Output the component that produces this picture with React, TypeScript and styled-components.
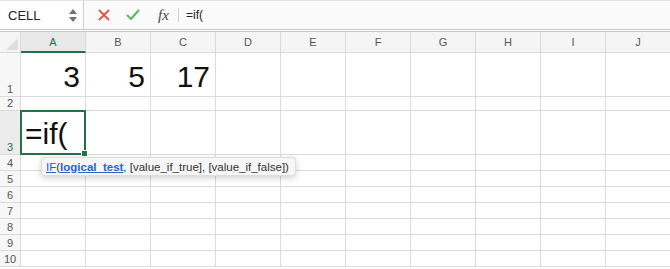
import React from "react";
import styled, { createGlobalStyle } from "styled-components";

const Global = createGlobalStyle`
  html, body { margin: 0; padding: 0; background: #fff; }
  body { font-family: "Liberation Sans", Arial, sans-serif; overflow: hidden; }
`;

const GREEN = "#217346";
const GRID = "#dadada";

const Page = styled.div`
  width: 670px;
  height: 269px;
  overflow: hidden;
  position: relative;
`;

const FormulaBar = styled.div`
  display: flex;
  align-items: stretch;
  height: 29px;
  border-top: 1px solid #e2e2e2;
  box-sizing: border-box;
  background: #fafafa;
`;

const NameBox = styled.div`
  width: 84px;
  box-sizing: border-box;
  border-right: 1px solid #cfcfcf;
  background: #fff;
  display: flex;
  align-items: center;
  justify-content: space-between;
  padding: 0 6px 0 8px;
  font-size: 13px;
  color: #222;
`;

const Spinner = styled.div`
  display: flex;
  flex-direction: column;
  gap: 3px;
`;

const Actions = styled.div`
  display: flex;
  align-items: center;
  box-sizing: border-box;
  padding-left: 14px;
  gap: 16px;
  width: 94px;
`;

const Fx = styled.span`
  font-family: "Liberation Serif", "Times New Roman", serif;
  font-style: italic;
  font-size: 15px;
  color: #444;
  padding-left: 2px;
`;

const Input = styled.div`
  flex: 1;
  display: flex;
  align-items: center;
  border-left: 1px solid #d0d0d0;
  margin: 7px 0;
  padding-left: 7px;
  font-size: 12px;
  color: #222;
`;

const Divider = styled.div`
  border-top: 1px solid #c8c8c8;
  border-bottom: 1px solid #c8c8c8;
  box-sizing: border-box;
  height: 3px;
  background: #fff;
`;

const Sheet = styled.div`
  display: grid;
  grid-template-columns: 21px repeat(10, 65px);
  grid-template-rows: 21px 44px 14px 44px repeat(7, 16px);
  position: relative;
`;

const Corner = styled.div`
  background: #f5f5f5;
  border-right: 1px solid ${GRID};
  border-bottom: 1px solid ${GRID};
  box-sizing: border-box;
  position: relative;
  &::after {
    content: "";
    position: absolute;
    right: 2px;
    bottom: 2px;
    border-left: 12px solid transparent;
    border-bottom: 12px solid #dedede;
  }
`;

const ColHead = styled.div<{ $active?: boolean }>`
  background: ${(p) => (p.$active ? "#e9e9e9" : "#f5f5f5")};
  border-right: 1px solid ${GRID};
  border-bottom: ${(p) => (p.$active ? `2px solid ${GREEN}` : `1px solid ${GRID}`)};
  box-sizing: border-box;
  display: flex;
  align-items: center;
  justify-content: center;
  font-size: 11px;
  color: ${(p) => (p.$active ? GREEN : "#555")};
`;

const RowHead = styled.div<{ $active?: boolean }>`
  background: ${(p) => (p.$active ? "#ececec" : "#f7f7f7")};
  border-right: 1px solid ${GRID};
  border-bottom: 1px solid ${GRID};
  box-sizing: border-box;
  display: flex;
  align-items: flex-end;
  justify-content: center;
  padding-bottom: 1px;
  font-size: 11px;
  color: ${(p) => (p.$active ? GREEN : "#555")};
`;

const Cell = styled.div<{ $align?: "left" | "right" }>`
  border-right: 1px solid ${GRID};
  border-bottom: 1px solid ${GRID};
  box-sizing: border-box;
  display: flex;
  align-items: flex-end;
  justify-content: ${(p) => (p.$align === "left" ? "flex-start" : "flex-end")};
  padding: 0 5px 4px 5px;
  font-size: 30px;
  line-height: 1;
  color: #111;
`;

const ActiveCell = styled(Cell)`
  border: 2px solid ${GREEN};
  position: relative;
  margin: -1px 0 0 -1px;
  padding-left: 3px;
  &::after {
    content: "";
    position: absolute;
    right: -4px;
    bottom: -4px;
    width: 5px;
    height: 5px;
    background: ${GREEN};
    border: 1px solid #fff;
  }
`;

const Tip = styled.div`
  position: absolute;
  left: 41px;
  top: 125px;
  height: 17px;
  padding: 0 6px 0 4px;
  display: flex;
  align-items: center;
  background: #f6f6f6;
  border: 1px solid #dcdcdc;
  border-radius: 3px;
  box-shadow: 0 2px 6px rgba(0, 0, 0, 0.18);
  font-size: 11.5px;
  color: #333;
  white-space: nowrap;
`;

const TipLink = styled.span<{ $bold?: boolean }>`
  color: #2463d1;
  text-decoration: underline;
  font-weight: ${(p) => (p.$bold ? 700 : 400)};
`;

const cols = ["A", "B", "C", "D", "E", "F", "G", "H", "I", "J"];

const data: Record<number, (string | null)[]> = {
  1: ["3", "5", "17"],
};

export default function App() {
  return (
    <Page>
      <Global />
      <FormulaBar>
        <NameBox>
          CELL
          <Spinner>
            <svg width="8" height="5" viewBox="0 0 8 5"><path d="M4 0L8 5H0z" fill="#707070" /></svg>
            <svg width="8" height="5" viewBox="0 0 8 5"><path d="M0 0h8L4 5z" fill="#707070" /></svg>
          </Spinner>
        </NameBox>
        <Actions>
          <svg width="12" height="12" viewBox="0 0 12 12">
            <path d="M1.5 1.5l9 9M10.5 1.5l-9 9" stroke="#e0504a" strokeWidth="1.8" strokeLinecap="round" />
          </svg>
          <svg width="14" height="12" viewBox="0 0 14 12">
            <path d="M1.5 6.5l3.5 3.5 7.5-8.5" stroke="#5cb85c" strokeWidth="2" fill="none" strokeLinecap="round" strokeLinejoin="round" />
          </svg>
          <Fx>fx</Fx>
        </Actions>
        <Input>=if(</Input>
      </FormulaBar>
      <Divider />
      <Sheet>
        <Corner />
        {cols.map((c) => (
          <ColHead key={c} $active={c === "A"}>{c}</ColHead>
        ))}
        {Array.from({ length: 10 }, (_, i) => i + 1).map((r) => (
          <React.Fragment key={r}>
            <RowHead $active={r === 3}>{r}</RowHead>
            {cols.map((c, ci) => {
              if (r === 3 && ci === 0) {
                return <ActiveCell key={c} $align="left">=if(</ActiveCell>;
              }
              return <Cell key={c}>{data[r]?.[ci] ?? ""}</Cell>;
            })}
          </React.Fragment>
        ))}
        <Tip>
          <TipLink>IF</TipLink>(<TipLink $bold>logical_test</TipLink>, [value_if_true], [value_if_false])
        </Tip>
      </Sheet>
    </Page>
  );
}
